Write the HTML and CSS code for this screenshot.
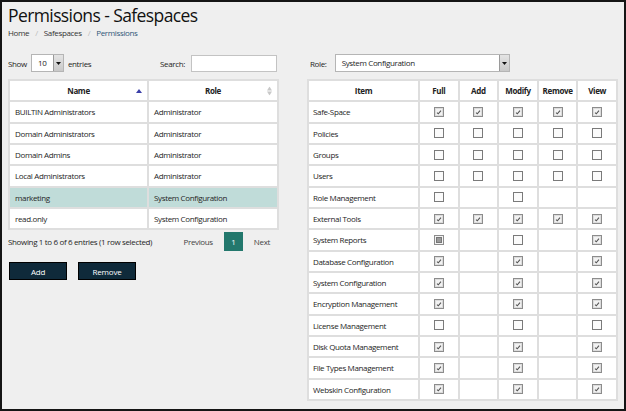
FILE: index.html
```html
<!DOCTYPE html>
<html>
<head>
<meta charset="utf-8">
<link rel="stylesheet" href="styles.css">
</head>
<body>
<div class="frame">
  <h1 class="title">Permissions - Safespaces</h1>
  <div class="crumbs">
    <span class="crumb">Home</span><span class="sep">/</span><span class="crumb">Safespaces</span><span class="sep">/</span><span class="crumb current">Permissions</span>
  </div>
  <div class="cols">
    <div class="left">
      <div class="controls">
        <div class="show">
          <span>Show</span>
          <span class="select small"><span class="val">10</span><span class="arrow"><svg width="5" height="3" viewBox="0 0 5 3"><path d="M0 0H5L2.5 3Z" fill="#111"/></svg></span></span>
          <span>entries</span>
        </div>
        <div class="search">
          <span>Search:</span>
          <span class="input"></span>
        </div>
      </div>
      <table class="grid users">
        <colgroup><col class="c-name"><col class="c-role"></colgroup>
        <thead>
          <tr>
            <th><span class="th-in">Name<svg class="sort" width="6" height="4" viewBox="0 0 6 4"><path d="M0 4H6L3 0Z" fill="#3b3fa8"/></svg></span></th>
            <th><span class="th-in">Role<svg class="sort" width="5" height="9" viewBox="0 0 5 9"><path d="M0 4H5L2.5 0Z M0 5H5L2.5 9Z" fill="#c8c8c8"/></svg></span></th>
          </tr>
        </thead>
        <tbody>
          <tr><td>BUILTIN Administrators</td><td>Administrator</td></tr>
          <tr><td>Domain Administrators</td><td>Administrator</td></tr>
          <tr><td>Domain Admins</td><td>Administrator</td></tr>
          <tr><td>Local Administrators</td><td>Administrator</td></tr>
          <tr class="selected"><td>marketing</td><td>System Configuration</td></tr>
          <tr><td>read.only</td><td>System Configuration</td></tr>
        </tbody>
      </table>
      <div class="info">
        <span>Showing 1 to 6 of 6 entries (1 row selected)</span>
        <div class="pager">
          <span class="pg">Previous</span>
          <span class="pg active">1</span>
          <span class="pg">Next</span>
        </div>
      </div>
      <div class="actions">
        <button class="btn">Add</button>
        <button class="btn">Remove</button>
      </div>
    </div>
    <div class="right">
      <div class="role-row">
        <span>Role:</span>
        <span class="select wide"><span class="val">System Configuration</span><span class="arrow"><svg width="5" height="3" viewBox="0 0 5 3"><path d="M0 0H5L2.5 3Z" fill="#111"/></svg></span></span>
      </div>
      <table class="grid perms" id="perms">
        <colgroup><col class="c-item"><col class="c-p"><col class="c-p"><col class="c-p"><col class="c-p"><col class="c-p"></colgroup>
        <thead>
          <tr><th>Item</th><th>Full</th><th>Add</th><th>Modify</th><th>Remove</th><th>View</th></tr>
        </thead>
        <tbody id="perm-body"></tbody>
      </table>
    </div>
  </div>
</div>
<script src="app.js"></script>
</body>
</html>
```
FILE: app.js
```js
(function () {
  var ON = '<svg class="cb" width="10" height="10" viewBox="0 0 10 10"><rect x="0.5" y="0.5" width="9" height="9" fill="#f2f2f2" stroke="#8c8c8c"/><rect x="1.5" y="1.5" width="7" height="7" fill="none" stroke="#dcdcdc"/><path d="M3 5.6L4.3 6.8L7 3.6" fill="none" stroke="#555" stroke-width="1.1"/></svg>';
  var OFF = '<svg class="cb" width="10" height="10" viewBox="0 0 10 10"><rect x="0.5" y="0.5" width="9" height="9" fill="#fbfbfb" stroke="#7a7a7a"/></svg>';
  var MID = '<svg class="cb" width="10" height="10" viewBox="0 0 10 10"><rect x="0.5" y="0.5" width="9" height="9" fill="#f2f2f2" stroke="#8c8c8c"/><rect x="2.5" y="2.5" width="5" height="5" fill="#9a9a9a" stroke="#777"/></svg>';
  // 1 = checked, 0 = unchecked, 2 = indeterminate, - = none
  var rows = [
    ["Safe-Space", "11111"],
    ["Policies", "00000"],
    ["Groups", "00000"],
    ["Users", "00000"],
    ["Role Management", "0-0--"],
    ["External Tools", "11111"],
    ["System Reports", "2-0-1"],
    ["Database Configuration", "1-1-1"],
    ["System Configuration", "1-1-1"],
    ["Encryption Management", "1-1-1"],
    ["License Management", "0-0-0"],
    ["Disk Quota Management", "1-1-1"],
    ["File Types Management", "1-1-1"],
    ["Webskin Configuration", "1-1-1"]
  ];
  var html = "";
  rows.forEach(function (r) {
    html += "<tr><td>" + r[0] + "</td>";
    for (var i = 0; i < 5; i++) {
      var c = r[1][i];
      var inner = c === "1" ? ON : c === "0" ? OFF : c === "2" ? MID : "";
      html += '<td class="cbc">' + inner + "</td>";
    }
    html += "</tr>";
  });
  document.getElementById("perm-body").innerHTML = html;
})();
```
FILE: styles.css
```css
* { box-sizing: border-box; }
html, body { margin: 0; padding: 0; }
body {
  font-family: "Open Sans", "Noto Sans", sans-serif;
  font-size: 8px;
  letter-spacing: -0.35px;
  color: #252525;
  background: #efefef;
}
.frame {
  width: 626px;
  height: 411px;
  border: 2px solid #151515;
  background: #efefef;
  padding: 0 7px 0 6px;
  overflow: hidden;
}
.title {
  margin: 0;
  padding-top: 1px;
  font-size: 17.5px;
  font-weight: 400;
  line-height: 24px;
  color: #111;
  letter-spacing: -0.6px;
}
.crumbs {
  margin-top: -1px;
  height: 14px;
  line-height: 14px;
  font-size: 8px;
  color: #333;
}
.sep { color: #bbb; margin: 0 6px; }
.current { color: #2f5877; }
.cols {
  display: flex;
  gap: 29px;
  margin-top: 14px;
}
.left { width: 271px; }
.right { width: 311px; }
.controls {
  display: flex;
  justify-content: space-between;
  align-items: center;
  height: 18px;
  padding-right: 2px;
}
.show, .search, .role-row {
  display: flex;
  align-items: center;
  gap: 4px;
}
.search { gap: 6px; }
.select {
  display: flex;
  height: 18px;
  background: #fff;
  border: 1px solid #b5b5b5;
}
.select .val { flex: 1; padding-left: 6px; line-height: 16px; }
.select .arrow {
  width: 10px;
  display: flex;
  align-items: center;
  justify-content: center;
  background: linear-gradient(#e4e4e4, #c9c9c9);
  border-left: 1px solid #9a9a9a;
}
.select.small { width: 33px; }
.input {
  display: block;
  width: 86px;
  height: 17px;
  background: #fff;
  border: 1px solid #c3c3c3;
}
.role-row { height: 18px; gap: 8px; padding-left: 2px; }
.select.wide { width: 175px; }
.grid {
  border-collapse: separate;
  border-spacing: 2px;
  background: #dedede;
  table-layout: fixed;
  margin-top: 7px;
}
.grid td, .grid th {
  background: #fff;
  height: 19.33px;
  padding: 0 5px;
  white-space: nowrap;
  overflow: hidden;
}
.grid th { font-weight: 700; text-align: center; color: #222; }
.users { width: 271px; margin-left: 0; }
.c-name { width: 137px; }
.th-in { display: block; position: relative; }
.sort { position: absolute; right: 0; top: 50%; transform: translateY(-50%); }
.users tr.selected td { background: #c0dcd9; }
.perms { width: 311px; margin-left: -1px; }
.perms td { padding: 0 4px; }
.perms th { padding: 0 2px; }
.c-item { width: 109px; }
.cbc { text-align: center; }
.cb { display: block; margin: 0 auto; }
.info {
  display: flex;
  justify-content: space-between;
  align-items: center;
  margin-top: 2px;
  height: 19px;
  padding-right: 9px;
}
.pager { display: flex; align-items: center; gap: 11px; }
.pg { color: #444; }
.pg.active {
  background: #23786d;
  color: #fff;
  width: 19px;
  height: 19px;
  line-height: 19px;
  text-align: center;
}
.actions { display: flex; gap: 11px; margin-top: 11px; padding-left: 1px; }
.btn {
  font-family: inherit;
  font-size: 8px;
  letter-spacing: -0.2px;
  color: #fff;
  background: #0f2a3a;
  border: 1px solid #000;
  height: 18px;
  width: 58px;
  padding: 0;
}
```
